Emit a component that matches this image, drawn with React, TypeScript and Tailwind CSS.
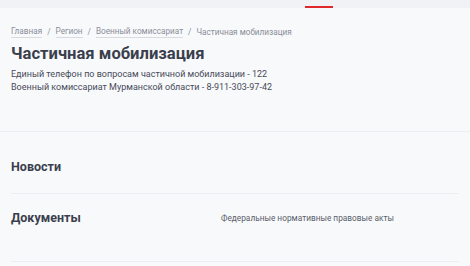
import React from "react";

export default function App() {
  const font = { fontFamily: "Roboto, 'Noto Sans', sans-serif" };
  return (
    <div className="w-[470px] h-[266px] overflow-hidden bg-[#f8f9fb] text-[#3d4150]" style={font}>
      <div className="h-[8px] bg-[#f1f2f5] relative">
        <div className="absolute left-[305px] top-[6px] w-[28px] h-[2px] bg-[#e0282c]" />
      </div>
      <div className="px-[11px]">
        <div className="pt-[17px] flex items-center text-[8.2px] leading-[12px] text-[#8a8e99]">
          <span className="border-b border-[#d9dbe0]">Главная</span>
          <span className="mx-[5px]">/</span>
          <span className="border-b border-[#d9dbe0]">Регион</span>
          <span className="mx-[5px]">/</span>
          <span className="border-b border-[#d9dbe0]">Военный комиссариат</span>
          <span className="mx-[5px]">/</span>
          <span>Частичная мобилизация</span>
        </div>
        <h1 className="mt-[6px] text-[16.6px] leading-[20px] font-bold text-[#3b3f4d]">Частичная мобилизация</h1>
        <div className="mt-[4px] text-[9px] leading-[13px] text-[#474b58]">
          <div>Единый телефон по вопросам частичной мобилизации - 122</div>
          <div>Военный комиссариат Мурманской области - 8-911-303-97-42</div>
        </div>
      </div>
      <div className="mt-[37px] border-t border-[#eceef1]" />
      <div className="px-[11px]">
        <div className="h-[62px] pt-[27px] border-b border-[#eceef1]">
          <div className="text-[12.5px] leading-[16px] font-bold text-[#3b3f4d]">Новости</div>
        </div>
        <div className="h-[68px] pt-[16px] flex border-b border-[#eceef1]">
          <div className="w-[210px] text-[12.5px] leading-[16px] font-bold text-[#3b3f4d]">Документы</div>
          <div className="text-[8.3px] leading-[16px] text-[#5a5e6a]">Федеральные нормативные правовые акты</div>
        </div>
      </div>
    </div>
  );
}
